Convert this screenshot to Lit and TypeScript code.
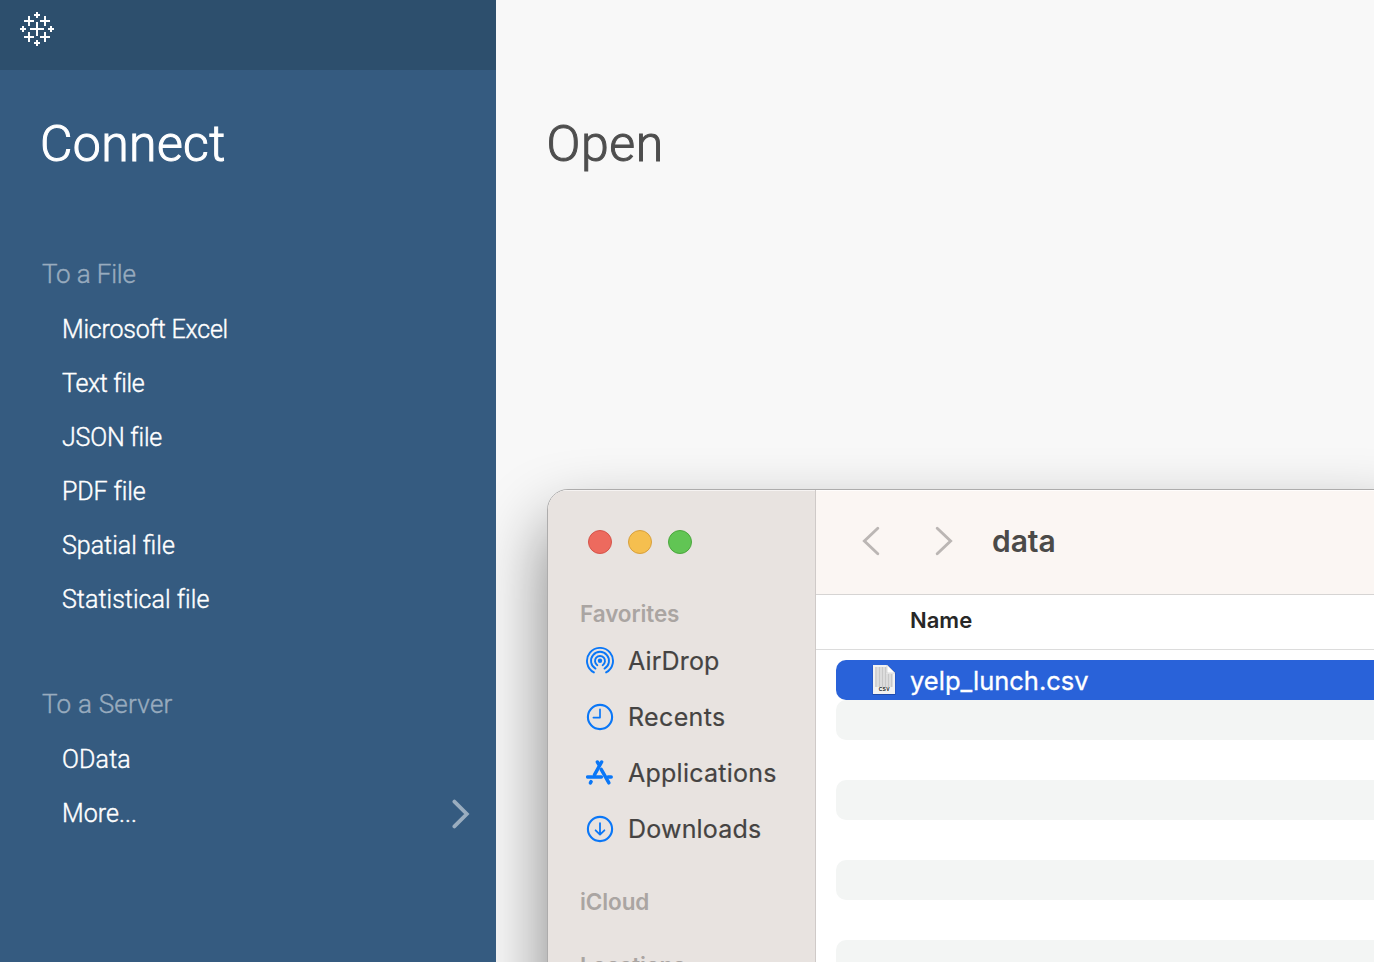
import { LitElement, html, css, svg, nothing } from "lit";
import { customElement } from "lit/decorators.js";
import { classMap } from "lit/directives/class-map.js";

interface Entry { label: string; track: number; more?: boolean }
interface Group { title: string; track: number; entries: Entry[] }

const groups: Group[] = [
  {
    title: "To a File", track: -0.15,
    entries: [
      { label: "Microsoft Excel", track: -0.2 },
      { label: "Text file", track: -0.33 },
      { label: "JSON file", track: -0.2 },
      { label: "PDF file", track: -0.1 },
      { label: "Spatial file", track: 0 },
      { label: "Statistical file", track: 0.04 },
    ],
  },
  {
    title: "To a Server", track: 0.25,
    entries: [
      { label: "OData", track: 0.15 },
      { label: "More...", track: 0.05, more: true },
    ],
  },
];

const airdrop = svg`
  <circle cx="14" cy="13.8" r="2.2" fill="currentColor"></circle>
  <g fill="none" stroke="currentColor" stroke-width="1.9" stroke-linecap="round">
    <path d="M11.3 18.2A5 5 0 1 1 16.7 18.2"></path>
    <path d="M9.5 21.6A9 9 0 1 1 18.5 21.6"></path>
    <path d="M7.9 25.4A13 13 0 1 1 20.1 25.4"></path>
  </g>`;
const clock = svg`
  <g fill="none" stroke="currentColor" stroke-width="2.1" stroke-linecap="round" stroke-linejoin="round">
    <circle cx="14" cy="14" r="12.1"></circle>
    <path d="M14 6.3V14.6H7.4" stroke-width="1.7"></path>
  </g>`;
const apps = svg`
  <g fill="none" stroke="currentColor" stroke-width="3.5" stroke-linecap="round">
    <path d="M15.6 3L8.6 15.6"></path>
    <path d="M11.4 3L12.6 5"></path>
    <path d="M15.2 10.4L22.9 23.8"></path>
    <path d="M1.7 17.9H15.4M22 17.9H25.2"></path>
    <path d="M5.1 22.7L4.4 23.9"></path>
  </g>`;
const download = svg`
  <g fill="none" stroke="currentColor" stroke-width="2.1" stroke-linecap="round" stroke-linejoin="round">
    <circle cx="14" cy="14" r="12.1"></circle>
    <path d="M14 8.2V19.3M9.6 15.3L14 19.6L18.4 15.3" stroke-width="1.8"></path>
  </g>`;

const places = [
  { label: "AirDrop", track: 0.12, icon: airdrop },
  { label: "Recents", track: 0.36, icon: clock },
  { label: "Applications", track: 0.25, icon: apps },
  { label: "Downloads", track: 0.2, icon: download },
];

const plus = (x: number, y: number, r: number) => `M${x - r} ${y}H${x + r}M${x} ${y - r}V${y + r}`;
const logoPath = [
  plus(17, 17, 7),
  plus(9, 9, 5), plus(25, 9, 5), plus(9, 25, 5), plus(25, 25, 5),
  plus(17, 3, 3), plus(17, 31, 3), plus(3, 17, 3), plus(31, 17, 3),
].join("");

@customElement("connect-pane")
class ConnectPane extends LitElement {
  static styles = css`
    :host { display: flex; flex-direction: column; background: #355b80; color: #fff; font-family: Roboto, sans-serif; font-weight: 300; }
    .bar { height: 70px; box-sizing: border-box; padding: 12px 20px; background: #2d4f6d; }
    .logo { display: block; width: 34px; height: 34px; }
    h1 { margin: 44px 0 73px 40px; font-size: 50px; line-height: 60px; font-weight: 300; letter-spacing: .35px; -webkit-text-stroke: 1px currentColor; }
    section { margin-bottom: 50px; }
    h2 { margin: 0 0 1px 42px; font-size: 26px; line-height: 55px; font-weight: 300; color: #98abbe; -webkit-text-stroke: .4px currentColor; }
    .entry { display: flex; align-items: center; justify-content: space-between; height: 54px; line-height: 54px; padding: 0 26px 0 62px; font-size: 25px; -webkit-text-stroke: .4px currentColor; }
    .chev { width: 18px; height: 30px; }
  `;
  render() {
    return html`
      <div class="bar"><svg class="logo" viewBox="0 0 34 34"><path d=${logoPath} stroke="#fff" stroke-width="2" fill="none"></path></svg></div>
      <h1>Connect</h1>
      ${groups.map((g) => html`<section>
        <h2 style="letter-spacing:${g.track}px">${g.title}</h2>
        ${g.entries.map((e) => html`<div class="entry"><span style="letter-spacing:${e.track}px">${e.label}</span>${e.more
          ? html`<svg class="chev" viewBox="0 0 18 30"><path d="M2.4 2.6L14.8 15L2.4 27.4" fill="none" stroke="#9aadbf" stroke-width="3.8" stroke-linecap="round" stroke-linejoin="miter"></path></svg>`
          : nothing}</div>`)}
      </section>`)}`;
  }
}

@customElement("finder-window")
class FinderWindow extends LitElement {
  static styles = css`
    :host { display: flex; box-sizing: border-box; overflow: hidden; color: #454342; font-family: Inter, sans-serif; background: #fff; border: 1px solid #adacac; border-radius: 21px 0 0 0; }
    aside { width: 267px; flex: none; background: #e8e3e0; border-right: 1px solid #cfcac8; box-shadow: inset 0 1px #f6f3f2; }
    .lights { display: flex; gap: 16px; padding: 40px 0 0 40px; height: 69px; }
    .light { width: 24px; height: 24px; box-sizing: border-box; border-radius: 50%; background: #ed6a5e; border: 1px solid #d5544a; }
    .amber { background: #f5bf4f; border-color: #d8a03c; }
    .green { background: #61c554; border-color: #4ba73d; }
    h3 { margin: 0; padding-left: 32px; font-size: 22.5px; line-height: 30px; font-weight: 600; letter-spacing: -.1px; color: #aaa5a2; }
    .places { padding: 4px 0 30px; }
    .place { display: flex; align-items: center; height: 56px; padding-left: 38px; gap: 14px; font-size: 25px; line-height: 56px; white-space: nowrap; -webkit-text-stroke: .2px currentColor; }
    .place svg { width: 28px; height: 28px; color: #0a77f7; flex: none; }
    .gap { margin-top: 34px; }
    main { flex: 1; min-width: 0; }
    .toolbar { display: flex; align-items: center; box-sizing: border-box; height: 105px; padding: 0 0 3px 46px; background: #fbf6f3; border-bottom: 1px solid #d6d4d3; box-shadow: inset 0 1px #fffdfc; }
    .nav { width: 18px; height: 30px; }
    .fwd { margin-left: 55px; }
    .title { margin-left: 39px; font-size: 30px; line-height: 36px; font-weight: 600; letter-spacing: -.05px; color: #4b4a48; }
    .columns { box-sizing: border-box; height: 55px; padding-left: 94px; border-bottom: 1px solid #dcdcdc; font-size: 22px; line-height: 50px; font-weight: 600; color: #272727; }
    .rows { padding: 10px 0 0 20px; }
    .row { display: flex; align-items: center; height: 40px; border-radius: 10px 0 0 10px; }
    .odd { background: #f3f5f4; }
    .selected { background: #2962d9; color: #fff; }
    .doc { width: 28px; height: 34px; margin-left: 34px; }
    .name { margin: 2px 0 0 12px; font-size: 25.5px; line-height: 40px; letter-spacing: 0; -webkit-text-stroke: .3px currentColor; }
    .ext { font: 700 5px "Liberation Sans", sans-serif; }
  `;
  render() {
    return html`
      <aside>
        <div class="lights"><span class="light"></span><span class="light amber"></span><span class="light green"></span></div>
        <h3>Favorites</h3>
        <div class="places">${places.map((p) => html`<div class="place"><svg viewBox="0 0 28 28">${p.icon}</svg><span style="letter-spacing:${p.track}px">${p.label}</span></div>`)}</div>
        <h3>iCloud</h3>
        <h3 class="gap">Locations</h3>
      </aside>
      <main>
        <div class="toolbar">
          <svg class="nav" viewBox="0 0 18 30"><path d="M15.8 2.3L2.4 15L15.8 27.7" fill="none" stroke="#bbb6b4" stroke-width="2.9" stroke-linecap="round"></path></svg>
          <svg class="nav fwd" viewBox="0 0 18 30"><path d="M2.2 2.3L15.6 15L2.2 27.7" fill="none" stroke="#bbb6b4" stroke-width="2.9" stroke-linecap="round"></path></svg>
          <span class="title">data</span>
        </div>
        <div class="columns">Name</div>
        <div class="rows">${[0, 1, 2, 3, 4, 5, 6, 7].map((i) => html`<div class=${classMap({ row: true, selected: i === 0, odd: i % 2 === 1 })}>${i === 0 ? html`
          <svg class="doc" viewBox="0 0 28 34">
            <path d="M2.6 2.6H17.6L25.4 10V32H2.6Z" fill="#17398a" opacity=".6"></path>
            <path d="M3 2H17L25 10V31H3Z" fill="#f1f1f1"></path>
            <path d="M5 4H16.5V11H23V24H5Z" fill="#dedede"></path>
            <path d="M6 4V24M9.5 4V24M12.5 4V24M15.5 4V24M18.5 11V24M21.5 11V24" stroke="#c8c8c8" stroke-width="1.2"></path>
            <path d="M17 2L25 10H17Z" fill="#fff" stroke="#c2c2c2" stroke-width=".6"></path>
            <text class="ext" x="8.7" y="28.3" textLength="10.8" fill="#222">CSV</text>
          </svg><span class="name">yelp_lunch.csv</span>` : nothing}</div>`)}</div>
      </main>`;
  }
}

@customElement("app-root")
class AppRoot extends LitElement {
  static styles = css`
    :host { display: block; position: relative; height: 962px; overflow: hidden; background: #f8f8f8; }
    .layout { display: grid; grid-template-columns: 496px 1fr; height: 962px; }
    connect-pane { z-index: 2; }
    .open { margin: 114px 0 0 50.5px; font: 300 50px/60px Roboto, sans-serif; letter-spacing: .6px; color: #4e4e4e; -webkit-text-stroke: 1px currentColor; }
    finder-window { position: absolute; z-index: 1; left: 547px; top: 489px; width: 860px; height: 540px; box-shadow: 0 34px 68px rgba(0, 0, 0, .48); }
  `;
  render() {
    return html`<div class="layout"><connect-pane></connect-pane><div><h1 class="open">Open</h1></div></div><finder-window></finder-window>`;
  }
}
